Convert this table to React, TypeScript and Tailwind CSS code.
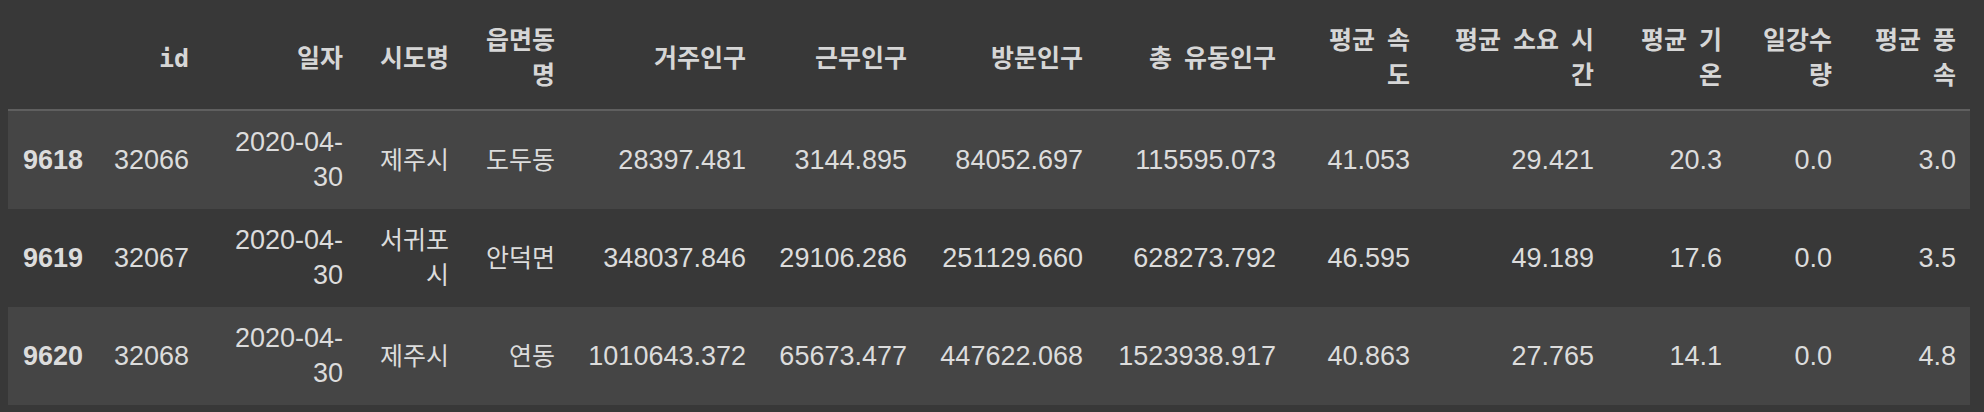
import React from "react"

type Cell = string | string[]

const colWidths = [
  "w-[89px]",
  "w-[106px]",
  "w-[154px]",
  "w-[106px]",
  "w-[106px]",
  "w-[191px]",
  "w-[161px]",
  "w-[176px]",
  "w-[193px]",
  "w-[134px]",
  "w-[184px]",
  "w-[128px]",
  "w-[110px]",
  "w-[124px]",
]

const headers: Cell[] = [
  "",
  "id",
  "일자",
  "시도명",
  ["읍면동", "명"],
  "거주인구",
  "근무인구",
  "방문인구",
  "총 유동인구",
  ["평균 속", "도"],
  ["평균 소요 시", "간"],
  ["평균 기", "온"],
  ["일강수", "량"],
  ["평균 풍", "속"],
]

const rows: Cell[][] = [
  ["9618", "32066", ["2020-04-", "30"], "제주시", "도두동", "28397.481", "3144.895", "84052.697", "115595.073", "41.053", "29.421", "20.3", "0.0", "3.0"],
  ["9619", "32067", ["2020-04-", "30"], ["서귀포", "시"], "안덕면", "348037.846", "29106.286", "251129.660", "628273.792", "46.595", "49.189", "17.6", "0.0", "3.5"],
  ["9620", "32068", ["2020-04-", "30"], "제주시", "연동", "1010643.372", "65673.477", "447622.068", "1523938.917", "40.863", "27.765", "14.1", "0.0", "4.8"],
]

// korean columns in the body are a bit smaller so 3 syllables fit
const koreanCols = [3, 4]

function Lines({ value }: { value: Cell }) {
  const lines = Array.isArray(value) ? value : [value]
  return (
    <>
      {lines.map((line, i) => (
        <span key={i} className="block whitespace-nowrap">
          {line}
        </span>
      ))}
    </>
  )
}

export default function App() {
  return (
    <div className="min-h-screen bg-[#383838] pt-[9px] pl-[8px]">
      <table className="table-fixed border-collapse w-[1962px] text-[#dcdcdc] font-['Liberation_Sans','Noto_Sans_CJK_KR',sans-serif] text-[27px] leading-[35px]">
        <colgroup>
          {colWidths.map((w, i) => (
            <col key={i} className={w} />
          ))}
        </colgroup>
        <thead>
          <tr className="border-b-2 border-[#5f5f5f]">
            {headers.map((h, i) => (
              <th
                key={i}
                className="text-right align-middle px-[14px] pt-[14px] pb-[16px] font-bold text-[25px] text-[#d6d6d6] [word-spacing:-3px] font-['DejaVu_Sans_Mono','Noto_Sans_CJK_KR',monospace]"
              >
                <Lines value={h} />
              </th>
            ))}
          </tr>
        </thead>
        <tbody>
          {rows.map((row, r) => (
            <tr key={r} className={r % 2 === 0 ? "bg-[#454545]" : "bg-transparent"}>
              {row.map((cell, c) =>
                c === 0 ? (
                  <th key={c} className="text-right align-middle px-[14px] py-[14px] font-bold">
                    <Lines value={cell} />
                  </th>
                ) : (
                  <td
                    key={c}
                    className={`text-right align-middle px-[14px] py-[14px] ${
                      koreanCols.includes(c) ? "text-[25px]" : ""
                    }`}
                  >
                    <Lines value={cell} />
                  </td>
                )
              )}
            </tr>
          ))}
        </tbody>
      </table>
    </div>
  )
}
